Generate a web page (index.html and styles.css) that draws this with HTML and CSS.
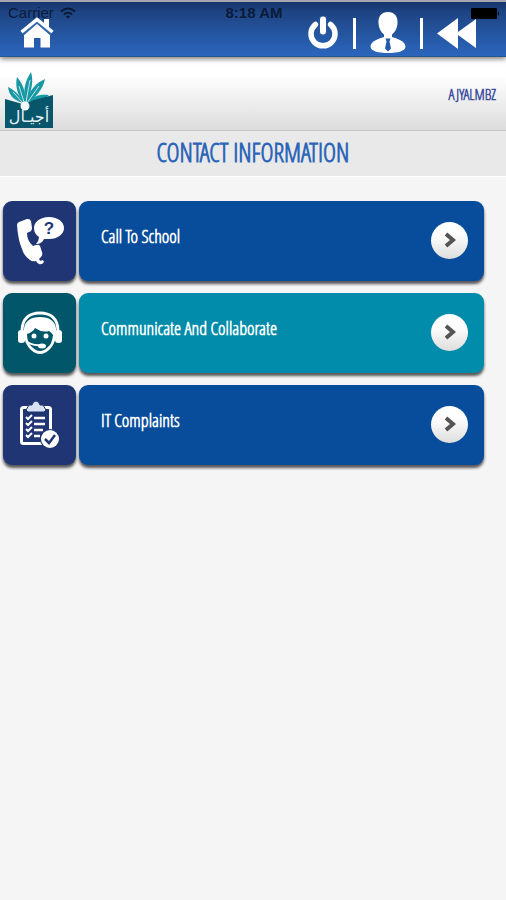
FILE: index.html
```html
<!DOCTYPE html>
<html lang="en">
<head>
<meta charset="utf-8">
<meta name="viewport" content="width=device-width, initial-scale=1">
<title>Contact Information</title>
<link rel="stylesheet" href="styles.css">
</head>
<body>
<header class="topbar">
  <div class="status">
    <span class="carrier">Carrier
      <svg width="16" height="12" viewBox="0 0 16 12" aria-hidden="true"><g fill="none" stroke="currentColor" stroke-width="2"><path d="M1 4.5Q8-1.500 15 4.500"/><path d="M4 7.500Q8 4 12 7.500"/></g><path d="M5.800 9.300Q8 7.500 10.200 9.300L8 11.800z" fill="currentColor"/></svg>
    </span>
    <span class="time">8:18 AM</span>
    <svg class="battery" width="29" height="11" viewBox="0 0 29 11" aria-hidden="true"><rect width="26" height="11" rx="1"/><path d="M27 3q2 2.500 0 5z"/></svg>
  </div>
  <nav class="nav">
    <a class="home" href="#" aria-label="Home">
      <svg width="34" height="32" viewBox="0 0 34 32"><path fill="#fff" d="M24 2h5v10l-5-4z"/><path fill="#fff" d="M4 17.500 17 6.500 30 17.500V30.500H20.500V21H14V30.500H4z"/><path d="M2 16.500 17 3.500 32 16.500" fill="none" stroke="#3569ae" stroke-width="5"/><path d="M1.500 15 17 2.500 32.500 15" fill="none" stroke="#fff" stroke-width="3.500"/></svg>
    </a>
    <div class="actions">
      <button aria-label="Log out"><svg width="32" height="34" viewBox="0 0 32 34"><path d="M8.500 8.500A12 12 0 1 0 23.500 8.500" fill="none" stroke="#fff" stroke-width="5.500" stroke-linecap="round"/><path d="M16 3.500v12" stroke="#2a579f" stroke-width="9" stroke-linecap="round"/><path d="M16 3.500v12" stroke="#fff" stroke-width="6" stroke-linecap="round"/></svg></button>
      <span class="divider"></span>
      <button aria-label="Profile"><svg width="36" height="42" viewBox="0 0 36 42"><path fill="#fff" d="M18 0c6.500 0 10 4.500 9.500 11-.4 6-2.500 9-5.500 11.500V25c6 2 13 4 13.500 9.500C35.500 39 28 41 18 41S.500 39 .500 34.500C1 29 8 27 14 25v-2.500c-3-2.500-5.100-5.500-5.500-11.500C8 4.500 11.500 0 18 0z"/><path fill="#235aa8" d="M15.500 26.500h5l-1 3 1.500 7-3 3-3-3 1.500-7z"/></svg></button>
      <span class="divider"></span>
      <button aria-label="Back"><svg width="40" height="31" viewBox="0 0 40 31"><path fill="#fff" d="M0 15.500 21 0v14L39 1v29L21 17v14z"/></svg></button>
    </div>
  </nav>
</header>
<section class="brand">
  <svg class="logo" width="48" height="56" viewBox="0 0 48 56" role="img" aria-label="Ajyal">
    <g fill="#1898a5"><path d="M18 31C8 28 4 23 3 15 11 19 16 25 19 31z"/><path d="M19 31C12 22 10 14 12 5 18 12 21 20 20 31z"/><path d="M20 31C18 18 20 9 26 0c3 10 0 21-5 31z"/><path d="M21 31C24 18 31 11 40 7 38 17 31 25 22 31z"/><path d="M22 31C28 24 34 22 44 23 38 29 30 32 22 32z"/></g>
    <path d="M18 31 8 20M19 30 14 14M21 30 25 8M22 31 34 14" stroke="#c6e5e8" fill="none"/>
    <path fill="#07566b" d="M0 27 14 31q5 1 6 4 2-5 9-7L48 23V56H0z"/>
    <circle cx="20" cy="34" r="4.500" fill="#f2fafa"/>
    <text class="logo-text" x="24" y="50" text-anchor="middle" direction="rtl">أجيـال</text>
  </svg>
  <span class="user">AJYALMBZ</span>
</section>
<h1 class="title">Contact Information</h1>
<main class="list">
  <a class="row" href="#">
    <span class="tile"><svg width="48" height="46" viewBox="0 0 48 46"><path fill="#fff" d="M3 4 11 1q3-.500 4 2l1 7q0 3-3 4l-2 1q0 8 6 13l3-1q3-1 4 1l2 6q1 3-1 5l-2 2q1 3 4 1l1 2q-2 3-5 2-2-1-3-3-4 1-6-1-6-4-8-11Q2 22 1 7q0-2 2-3z"/><path fill="#fff" d="M33-1c9 0 15 5 15 11S42 21 33 21h-5q-2 5-8 5 3-3 3-7-5-3-5-9c0-6 6-11 15-11z"/><text class="query" x="33" y="16" text-anchor="middle">?</text></svg></span>
    <span class="card"><span class="label">Call To School</span><span class="go"><svg width="12" height="16" viewBox="0 0 12 16"><path d="M2 2 9 8 2 14"/></svg></span></span>
  </a>
  <a class="row teal" href="#">
    <span class="tile"><svg width="46" height="46" viewBox="0 0 46 46"><path d="M5 21C5 8 13 3 23 3s18 5 18 18" fill="none" stroke="#fff" stroke-width="3"/><rect x="1" y="20" width="7" height="13" rx="3" fill="#fff"/><rect x="38" y="20" width="7" height="13" rx="3" fill="#fff"/><path fill="#fff" d="M7 22C6 11 14 7 23 7s17 4 16 15l-1 8c-2 8-9 14-15 14S10 38 8 30z"/><path fill="#02566a" d="M10 24q6-2 8-6 7 5 14 3 2 1 4 4-1 9-5 12-8 8-16 0-5-4-5-13z"/><circle cx="17" cy="26" r="2.500" fill="#fff"/><circle cx="29" cy="26" r="2.500" fill="#fff"/><path d="M9 31q6 5 15 4" fill="none" stroke="#fff" stroke-width="2"/><ellipse cx="25" cy="36" rx="4" ry="2.500" fill="#fff"/></svg></span>
    <span class="card"><span class="label">Communicate And Collaborate</span><span class="go"><svg width="12" height="16" viewBox="0 0 12 16"><path d="M2 2 9 8 2 14"/></svg></span></span>
  </a>
  <a class="row" href="#">
    <span class="tile"><svg width="40" height="48" viewBox="0 0 40 48"><rect x="1.500" y="6.500" width="29" height="36" rx="2" fill="none" stroke="#fff" stroke-width="3"/><path fill="#d9e1f4" stroke="#203573" d="M9 4h3q1-4 4-4t4 4h3l3 5-2 2H8l-2-2z"/><g stroke="#fff" stroke-width="2.500" fill="none"><path d="M14 17h11M14 23h11M14 29h9M14 35h6"/><path stroke-width="2" d="m6 16 2 2 4-4M6 22l2 2 4-4M6 28l2 2 4-4M6 34l2 2 4-4"/></g><circle cx="30" cy="38" r="10" fill="#203573"/><circle cx="30" cy="38" r="9" fill="#fff"/><path d="m25 38 4 4 6-8" fill="none" stroke="#203573" stroke-width="2.500"/></svg></span>
    <span class="card"><span class="label">IT Complaints</span><span class="go"><svg width="12" height="16" viewBox="0 0 12 16"><path d="M2 2 9 8 2 14"/></svg></span></span>
  </a>
</main>
</body>
</html>
```
FILE: styles.css
```css
* { box-sizing: border-box; }
body {
  margin: 0;
  min-height: 100vh;
  background: #f5f5f5;
  font-family: "Open Sans Condensed Light", "Open Sans Condensed", "Liberation Sans", sans-serif;
}
.topbar {
  position: relative;
  padding: 10px 29px 0 20px;
  height: 57px;
  border-top: 2px solid #a5a7ad;
  border-bottom: 1px solid #2b5688;
  background: linear-gradient(#17346e, #1e4584 20%, #2b66bd);
  box-shadow: 0 2px 5px rgba(0, 0, 0, .5);
}
.status {
  position: absolute;
  inset: 3px 6px auto 8px;
  display: grid;
  grid-template-columns: 1fr auto 1fr;
  align-items: center;
  height: 16px;
  color: #0b1a38;
  font: 15px/16px "Liberation Sans", sans-serif;
}
.carrier { display: flex; align-items: center; gap: 6px; }
.time { font-weight: 700; }
.battery { justify-self: end; fill: #000; }
.nav { display: flex; justify-content: space-between; }
.home { position: relative; height: 40px; padding-top: 5px; }
.actions { display: flex; align-items: center; gap: 14px; height: 42px; }
.actions button { padding: 0; border: 0; background: none; line-height: 0; }
.divider { width: 3px; height: 31px; background: #fff; }
.brand {
  display: flex;
  align-items: center;
  justify-content: space-between;
  height: 74px;
  padding: 0 10px 0 5px;
  border-bottom: 1px solid #c4c4c4;
  background: linear-gradient(#fff 25%, #dcdcdc);
}
.logo { margin-top: 12px; }
.logo-text { font: 16px "DejaVu Sans", sans-serif; fill: #e5f1f5; }
.user { color: #3c4e9e; font-size: 15px; font-weight: 700; }
.title {
  margin: 0;
  height: 46px;
  border-bottom: 1px solid #fff;
  background: #e9e9e9;
  color: #2d66b8;
  font-size: 25px;
  line-height: 42px;
  font-weight: 700;
  text-align: center;
  text-transform: uppercase;
}
.list { display: grid; gap: 12px; padding: 24px 22px 24px 3px; }
.row { display: flex; gap: 3px; height: 80px; color: #fff; text-decoration: none; }
.tile, .card { border-radius: 9px; box-shadow: 0 3px 3px rgba(0, 0, 0, .65); }
.tile { display: grid; place-items: center; width: 73px; background: #203573; }
.tile svg { overflow: visible; }
.card {
  display: flex;
  flex: 1;
  align-items: center;
  justify-content: space-between;
  padding: 0 16px 2px 22px;
  background: #084d9c;
}
.teal .tile { background: #02566a; }
.teal .card { background: #008caa; }
.label { padding-bottom: 8px; font-size: 18px; line-height: 24px; font-weight: 700; }
.query { font: bold 17px "Liberation Sans", sans-serif; fill: #203573; }
.go {
  display: grid;
  place-items: center;
  width: 37px;
  height: 37px;
  border-radius: 50%;
  background: linear-gradient(#fff 30%, #dedede);
}
.go path { fill: none; stroke: #555; stroke-width: 4; }
```
